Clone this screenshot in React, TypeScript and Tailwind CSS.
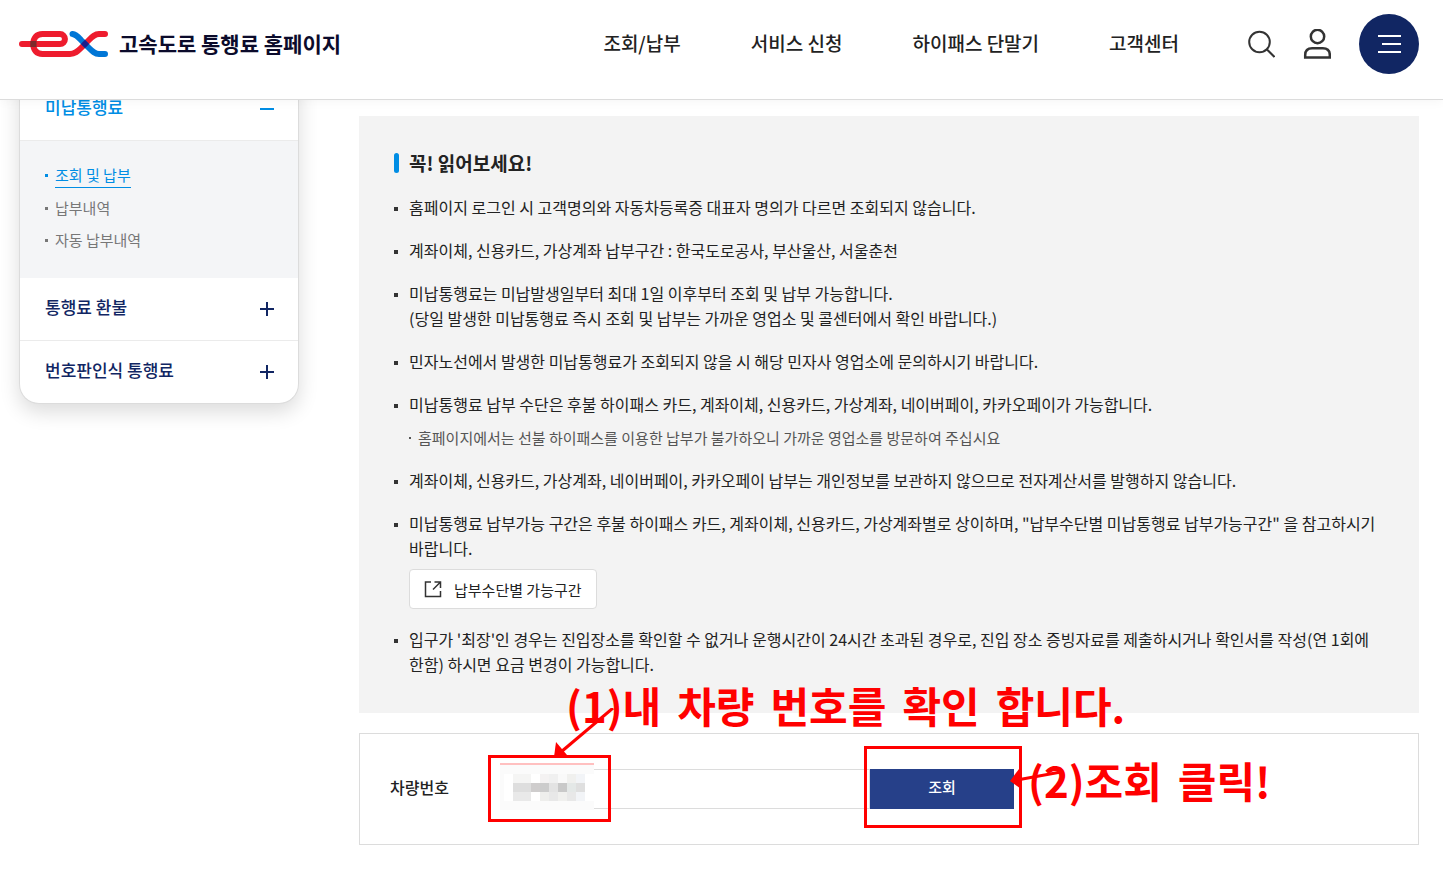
import type { ReactNode } from "react";

const menus = ["조회/납부", "서비스 신청", "하이패스 단말기", "고객센터"];

const subMenus = ["조회 및 납부", "납부내역", "자동 납부내역"];

// Colours of the masked plate number, row by row
const mosaic = [
  ["#ffffff", "#f5f5f4", "#f5f5f4", "#ffffff", "#f4f2f2", "#f0f0f0", "#f9f9f9", "#f0f0ee", "#f2f4f7"],
  ["#ffffff", "#dedede", "#dedede", "#cfcdcd", "#cccccc", "#e3e3e3", "#c9c9c9", "#e4e8e7", "#dfdfdf"],
  ["#ffffff", "#e9e9e9", "#e9e9e9", "#ffffff", "#eeeeec", "#e8e8e8", "#f0f0ee", "#e8e8e8", "#f2f4f7"],
];

function Logo() {
  return (
    <svg viewBox="19 31 89 26" className="h-[26px] w-[89px]" fill="none" strokeWidth="6" strokeLinecap="round">
      <path
        d="M22 44H60a4.900 4.900 0 0 0 0-9.900H42.500C36.500 34.100 33.300 38 33.300 44S36.500 54 42.500 54H70C75 54 77.500 51.500 81 48L89 40C92.500 36.500 95 34.100 99 34.100H105"
        stroke="#ee1c2e"
      />
      <path d="M72.500 34.100C76 34.500 78 36.800 81 40L89 48C92.500 51.500 95 54 99 54H105" stroke="#0076d6" />
      <path d="M30.300 41h6.200v6h-6.200z" fill="#7d2a2c" />
      <path d="M85 39.800l4.200 4.200L85 48.200 80.800 44z" fill="#1b1f8a" />
    </svg>
  );
}

function Header() {
  return (
    <header className="sticky top-0 z-10 flex h-[100px] items-center border-b border-[#dcdcdc] bg-white pr-6 pb-3 pl-[19px] shadow-[0_2px_10px_rgba(0,0,0,0.04)]">
      <a href="#" className="flex items-center gap-[11px] text-[21px] font-bold text-[#0b0b2b]">
        <Logo />
        고속도로 통행료 홈페이지
      </a>
      <nav className="mr-[68px] ml-auto flex gap-[70px] text-[19px] font-medium text-[#222]">
        {menus.map((menu) => (
          <a key={menu} href="#">
            {menu}
          </a>
        ))}
      </nav>
      <div className="flex items-center gap-7">
        <button type="button" aria-label="검색">
          <svg viewBox="0 0 28 28" className="size-7" fill="none" stroke="#333" strokeWidth="2">
            <circle cx="12.500" cy="12" r="10.300" />
            <path d="M19.500 19l8 8" />
          </svg>
        </button>
        <button type="button" aria-label="로그인">
          <svg viewBox="0 0 28 30" className="h-[30px] w-7" fill="none" stroke="#333" strokeWidth="2.500">
            <circle cx="14.500" cy="7.500" r="6.700" />
            <path d="M2.200 28.500V26q0-6.800 7-6.800h10.600q7 0 7 6.800v2.500z" />
          </svg>
        </button>
        <button
          type="button"
          aria-label="전체메뉴"
          className="flex size-[60px] items-center justify-center rounded-full bg-[#112663]"
        >
          <svg viewBox="0 0 24 20" className="h-5 w-6" stroke="#fff" strokeWidth="2">
            <path d="M1 2h23M5 10h19M1 18h23" />
          </svg>
        </button>
      </div>
    </header>
  );
}

function SideGroup({ title, open }: { title: string; open?: boolean }) {
  return (
    <button
      type="button"
      className={`flex h-[62px] w-full items-center justify-between px-6 pl-[25px] text-[17px] font-medium ${
        open ? "text-[#008de4]" : "text-[#112663]"
      }`}
    >
      <span className="pb-1">{title}</span>
      <svg viewBox="0 0 14 14" className="size-[14px]" stroke="currentColor" strokeWidth="2">
        <path d={open ? "M0 7h14" : "M0 7h14M7 0v14"} />
      </svg>
    </button>
  );
}

function Sidebar() {
  return (
    <aside className="-mt-[22px] w-[280px] shrink-0 self-start rounded-b-[20px] border border-t-0 border-[#dcdcdc] bg-white shadow-[0_8px_20px_rgba(0,0,0,0.14)]">
      <SideGroup title="미납통행료" open />
      <ul className="flex flex-col gap-2 border-t border-[#ebebeb] bg-[#f4f5f7] pt-[22px] pb-[26px] pl-[25px] text-[15px] leading-6 text-[#777]">
        {subMenus.map((menu, i) => (
          <li key={menu} className={`flex items-center gap-[7px] ${i === 0 ? "text-[#008de4]" : ""}`}>
            <i className="size-[3px] bg-current" />
            <a href="#" className={i === 0 ? "border-b border-[#008de4]" : ""}>
              {menu}
            </a>
          </li>
        ))}
      </ul>
      <SideGroup title="통행료 환불" />
      <div className="border-t border-[#ebebeb]">
        <SideGroup title="번호판인식 통행료" />
      </div>
    </aside>
  );
}

function Item({ children }: { children: ReactNode }) {
  return (
    <li className="flex gap-[11px]">
      <i className="mt-3 size-1 shrink-0 bg-[#333]" />
      <div>{children}</div>
    </li>
  );
}

function Notice() {
  return (
    <section className="bg-[#f3f3f3] px-[35px] pt-[33px] pb-9 break-keep text-[#222]">
      <h2 className="flex items-center gap-[10px] text-[19px] leading-7 font-bold">
        <i className="h-5 w-[5px] rounded-sm bg-[#008de4]" />
        꼭! 읽어보세요!
      </h2>
      <ul className="mt-[18px] flex flex-col gap-[18px] text-base leading-[25px]">
        <Item>홈페이지 로그인 시 고객명의와 자동차등록증 대표자 명의가 다르면 조회되지 않습니다.</Item>
        <Item>계좌이체, 신용카드, 가상계좌 납부구간 : 한국도로공사, 부산울산, 서울춘천</Item>
        <Item>
          미납통행료는 미납발생일부터 최대 1일 이후부터 조회 및 납부 가능합니다.
          <br />
          (당일 발생한 미납통행료 즉시 조회 및 납부는 가까운 영업소 및 콜센터에서 확인 바랍니다.)
        </Item>
        <Item>민자노선에서 발생한 미납통행료가 조회되지 않을 시 해당 민자사 영업소에 문의하시기 바랍니다.</Item>
        <Item>
          미납통행료 납부 수단은 후불 하이패스 카드, 계좌이체, 신용카드, 가상계좌, 네이버페이, 카카오페이가 가능합니다.
          <p className="mt-2 flex items-center gap-[7px] text-[15px] text-[#555]">
            <i className="size-[2px] bg-current" />
            홈페이지에서는 선불 하이패스를 이용한 납부가 불가하오니 가까운 영업소를 방문하여 주십시요
          </p>
        </Item>
        <Item>
          계좌이체, 신용카드, 가상계좌, 네이버페이, 카카오페이 납부는 개인정보를 보관하지 않으므로 전자계산서를 발행하지
          않습니다.
        </Item>
        <Item>
          미납통행료 납부가능 구간은 후불 하이패스 카드, 계좌이체, 신용카드, 가상계좌별로 상이하며, "납부수단별 미납통행료
          납부가능구간" 을 참고하시기 바랍니다.
          <button
            type="button"
            className="mt-2 flex h-10 items-center gap-3 rounded-sm border border-[#dcdcdc] bg-white px-[14px] text-[15px]"
          >
            <svg viewBox="0 0 18 18" className="size-[18px]" fill="none" stroke="#333" strokeWidth="1.500">
              <path d="M7 2H1.500v14.500h15V11M10.500 2h6v6M16.500 2L9 9.500" />
            </svg>
            납부수단별 가능구간
          </button>
        </Item>
        <Item>
          입구가 '최장'인 경우는 진입장소를 확인할 수 없거나 운행시간이 24시간 초과된 경우로, 진입 장소 증빙자료를
          제출하시거나 확인서를 작성(연 1회에 한함) 하시면 요금 변경이 가능합니다.
        </Item>
      </ul>
    </section>
  );
}

function PlateMask() {
  return (
    <div className="absolute top-[29px] left-[140px] h-[47px] w-[94px] border-t-2 border-[#ffc0c0] bg-[#fbfbfb] pt-[9px] pl-1">
      <div className="grid w-[90px] grid-cols-10 bg-white">
        {mosaic.map((row, y) =>
          [...row, "#ffffff"].map((color, x) => (
            <i key={`${y}-${x}`} className="h-[9px]" style={{ backgroundColor: color }} />
          )),
        )}
      </div>
    </div>
  );
}

// Red guide marks drawn over the form
function Guide() {
  return (
    <div className="pointer-events-none text-[42px] leading-none font-bold whitespace-nowrap text-[#ff0000]">
      <div className="absolute top-[21px] left-[128px] h-[67px] w-[123px] border-3 border-[#ff0000]" />
      <div className="absolute top-3 left-[504px] h-[82px] w-[158px] border-3 border-[#ff0000]" />
      <p className="absolute -top-[50px] left-[206px] flex gap-4">
        <span>(1)내</span> <span>차량</span> <span>번호를</span> <span>확인</span> <span>합니다.</span>
      </p>
      <p className="absolute top-[25px] left-[668px] flex gap-4">
        <span>(2)조회</span> <span>클릭!</span>
      </p>
      <svg viewBox="554 708 60 50" className="absolute -top-[26px] left-[194px] h-[50px] w-[60px]">
        <path d="M613 708L561 752" stroke="#ff0000" strokeWidth="3" />
        <path d="M554 757L556 742L567 755z" fill="#ff0000" />
      </svg>
      <svg viewBox="1010 768 52 22" className="absolute top-[34px] left-[650px] h-[22px] w-[52px]">
        <path d="M1061 772L1017 780" stroke="#ff0000" strokeWidth="3" />
        <path d="M1010 781L1019 769L1021 789z" fill="#ff0000" />
      </svg>
    </div>
  );
}

function SearchForm() {
  return (
    <form className="relative mt-5 flex items-center border border-[#dcdcdc] px-[30px] py-[35px]">
      <label htmlFor="plate" className="w-[110px] pb-1 text-base font-medium text-[#222]">
        차량번호
      </label>
      <input id="plate" type="text" className="h-10 w-[370px] border border-[#dcdcdc] px-3 outline-none" />
      <button type="button" className="h-10 w-36 bg-[#264089] pb-1 text-[15px] font-medium text-white">
        조회
      </button>
      <PlateMask />
      <Guide />
    </form>
  );
}

export default function App() {
  return (
    <div className="min-h-screen bg-white font-['Noto_Sans_CJK_KR',sans-serif]">
      <Header />
      <div className="flex gap-[60px] pr-6 pb-9 pl-[19px]">
        <Sidebar />
        <main className="min-w-0 flex-1 pt-4">
          <Notice />
          <SearchForm />
        </main>
      </div>
    </div>
  );
}
